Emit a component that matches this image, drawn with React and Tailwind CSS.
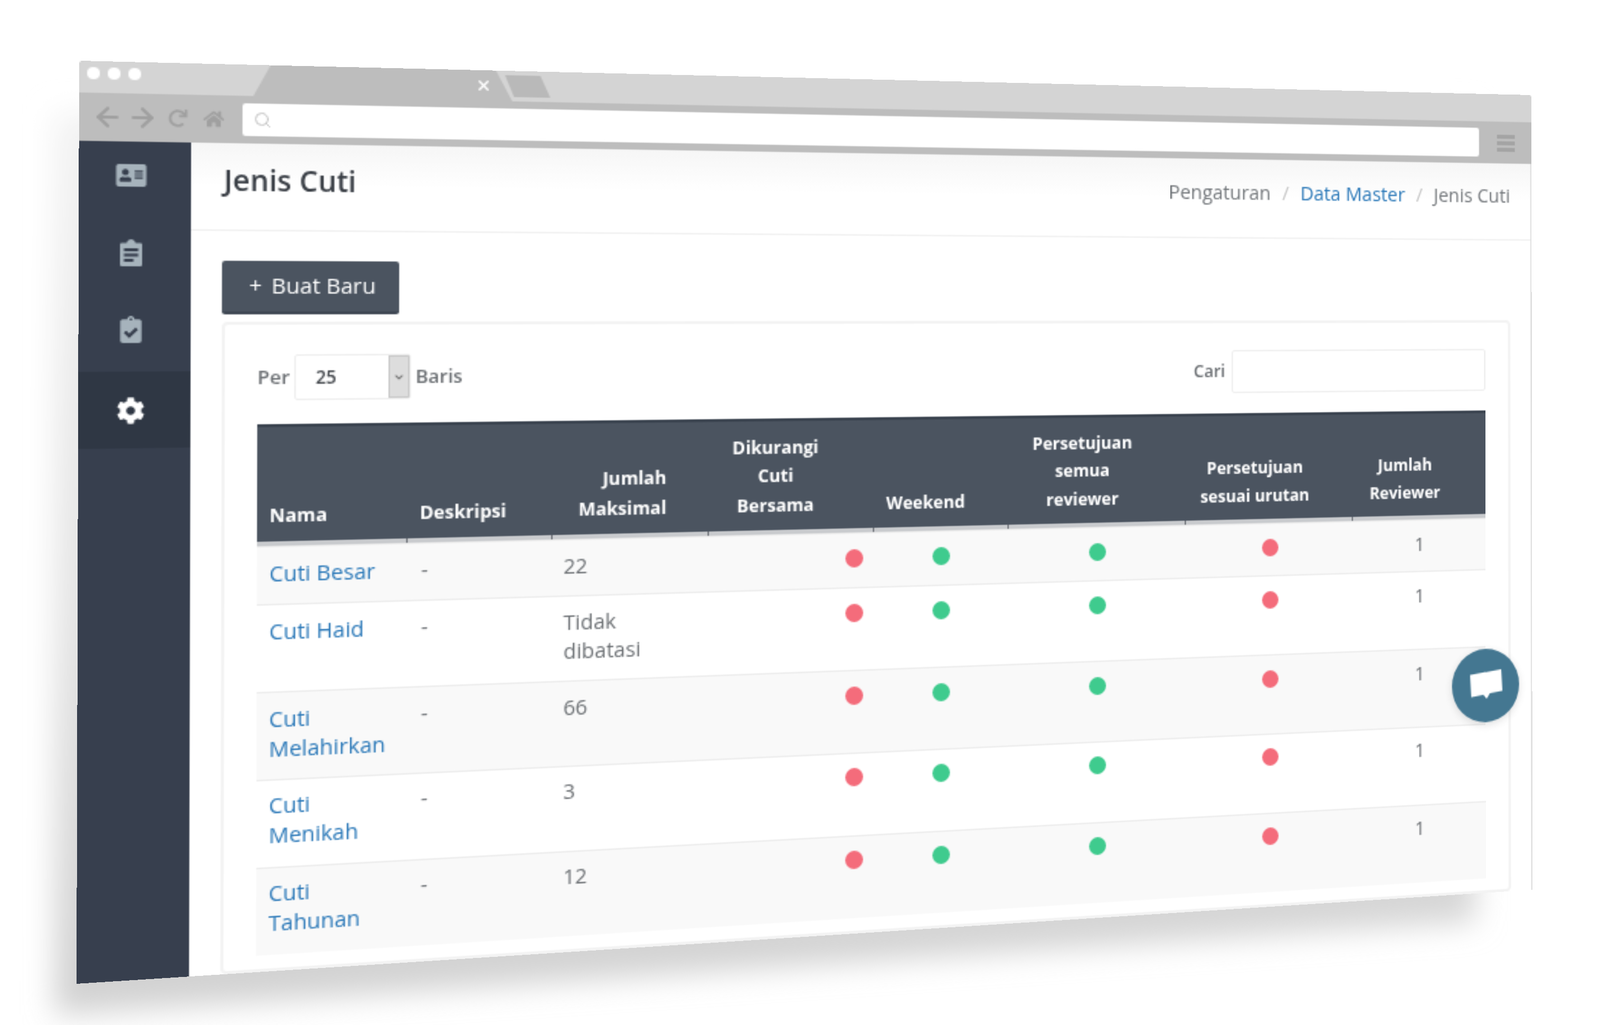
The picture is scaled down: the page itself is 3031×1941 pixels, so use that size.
import React from "react";
import { FaAddressCard, FaClipboardCheck, FaCog, FaRedo, FaHome, FaChevronDown } from "react-icons/fa";
import { ArrowLeft, ArrowRight, Search, X } from "lucide-react";

const rows = [
  { name: "Cuti Besar", max: "22", odd: true, late: false },
  { name: "Cuti Haid", max: "Tidak dibatasi", odd: false, late: false },
  { name: "Cuti Melahirkan", max: "66", odd: true, late: false },
  { name: "Cuti Menikah", max: "3", odd: false, late: true },
  { name: "Cuti Tahunan", max: "12", odd: true, late: true },
];

function Dot({ on }) {
  return <span className={on ? "inline-block h-[13px] w-[13px] -translate-y-[2px] rounded-full bg-[#3fcb8e] align-middle" : "inline-block h-[13px] w-[13px] -translate-y-[2px] rounded-full bg-[#f46c7b] align-middle"} />;
}

function Th({ children, className = "", tick = true }) {
  return (
    <th className={"relative border-t-2 border-b-[3px] border-t-[#39424e] border-b-[#c9cbce] bg-[#4b5460] pt-[8.5px] pb-[6.5px] pl-2 align-bottom text-[12.6px] leading-[20.7px] font-bold text-white " + className}>
      {children}
      {tick && <span className="absolute right-0 bottom-[-3px] h-[3px] w-px bg-[#6b6f75]" />}
    </th>
  );
}

function ClipboardLines() {
  return (
    <svg width="14" height="18" viewBox="0 0 14 18" fill="none">
      <path d="M1 2.5h3.2C4.5 1 5.6 0 7 0s2.500 1 2.800 2.500H13a1 1 0 0 1 1 1V17a1 1 0 0 1-1 1H1a1 1 0 0 1-1-1V3.500a1 1 0 0 1 1-1z" fill="#a6b3bc" />
      <rect x="2.500" y="6" width="9" height="2" fill="#373f4e" />
      <rect x="2.500" y="9.500" width="9" height="2" fill="#373f4e" />
      <rect x="2.500" y="13" width="6" height="2" fill="#373f4e" />
    </svg>
  );
}

function App() {
  const cell = "border-t border-[#ececec] align-top text-[14.6px] leading-5 text-[#6c7074]";
  return (
    <div className="relative h-[1941px] w-[3031px] overflow-hidden bg-white font-['Open_Sans',sans-serif]">
      <svg className="absolute inset-0" width="3031" height="1941">
        <defs>
          <filter id="soft" x="-10%" y="-10%" width="120%" height="120%">
            <feGaussianBlur stdDeviation="28" />
          </filter>
          <linearGradient id="fade" x1="0" y1="0" x2="0" y2="1">
            <stop offset="0" stopColor="#f3f3f3" />
            <stop offset="0.55" stopColor="#e4e4e4" />
            <stop offset="1" stopColor="#d0d0d0" />
          </linearGradient>
        </defs>
        <polygon points="104,215 2790,215 2795,1745 104,1922" fill="url(#fade)" filter="url(#soft)" />
      </svg>

      <div className="absolute top-0 left-0 flex h-[610px] w-[1056px] origin-top-left flex-col overflow-hidden rounded-t-[3px] bg-white [transform:matrix3d(3.04782,0.089015,0,0.0001526,-0.008828,2.85746,0,-0.00000435,0,0,1,0,150,115,0,1)]">
        <div className="h-[53px] shrink-0 bg-[#bdbdbd]">
          <div className="flex h-[21px] bg-[#d4d4d4]">
            <div className="flex w-[111px] items-start gap-[5px] pt-1 pl-[5px]">
              <span className="h-2 w-2 rounded-full bg-white" />
              <span className="h-2 w-2 rounded-full bg-white" />
              <span className="h-2 w-2 rounded-full bg-white" />
            </div>
            <div className="flex h-[21px] w-[172px] items-start justify-end bg-[#bdbdbd] pt-[5px] pr-[14px] [clip-path:polygon(0_100%,6.5%_0,93.5%_0,100%_100%)]">
              <X size={11} strokeWidth={3} className="text-white" />
            </div>
            <div className="mt-[3px] ml-[-5px] h-[15px] w-[31px] bg-[#b9b9b9] [clip-path:polygon(20%_100%,0_0,78%_0,100%_100%)]" />
          </div>
          <div className="flex h-[32px] items-center pl-[11px] text-[#a0a0a0]">
            <div className="flex w-[93px] items-center gap-2 blur-[0.2px]">
              <ArrowLeft size={20} strokeWidth={2.6} className="-mx-[3px]" />
              <ArrowRight size={20} strokeWidth={2.6} className="-mx-[3px]" />
              <FaRedo className="h-3 w-[15px]" />
              <FaHome className="h-3 w-[15px]" />
            </div>
            <div className="flex h-[22px] flex-1 items-center rounded-[2px] bg-white pl-[7px]">
              <Search size={12} strokeWidth={2} className="text-[#c4c4c4]" />
            </div>
            <div className="mr-[14px] ml-[15px] flex w-[15px] flex-col gap-[2px]">
              <span className="h-[3px] bg-[#a4a4a4]" />
              <span className="h-[3px] bg-[#a4a4a4]" />
              <span className="h-[3px] bg-[#a4a4a4]" />
            </div>
          </div>
        </div>

        <div className="flex min-h-0 flex-1">
          <aside className="w-[71px] shrink-0 bg-[#373f4e] text-[#a6b3bc]">
            <div className="flex h-[51px] items-center justify-center pr-[5px] pb-[6px]"><FaAddressCard className="h-[17px] w-5" /></div>
            <div className="flex h-[51px] items-center justify-center pr-[5px] pb-[5px]"><ClipboardLines /></div>
            <div className="flex h-[51px] items-center justify-center pr-[5px] pb-[5px]"><FaClipboardCheck className="h-[18px] w-[14px]" /></div>
            <div className="flex h-[51px] items-center justify-center bg-[#2f3744] pt-px pr-[5px] text-white"><FaCog className="h-[18px] w-[18px]" /></div>
          </aside>

          <main className="flex min-w-0 flex-1 flex-col border-r border-[#dcdcdc] bg-white">
            <header className="flex h-[59px] shrink-0 items-center justify-between border-b border-[#f0f0f0] bg-gradient-to-b from-[#f6f6f6] via-white to-white pr-[17px] pb-2 pl-[21px]">
              <h1 className="text-[19.3px] font-semibold text-[#3a3f46] blur-[0.25px]">Jenis Cuti</h1>
              <nav className="flex items-center pb-[2px] text-[14.9px] text-[#74787c] blur-[0.25px]">
                <span>Pengaturan</span>
                <span className="px-[9px] text-[#c4c4c4]">/</span>
                <span className="text-[#2a78b8]">Data Master</span>
                <span className="px-[9px] text-[#c4c4c4]">/</span>
                <span>Jenis Cuti</span>
              </nav>
            </header>

            <div className="flex min-h-0 flex-1 flex-col pt-5 pr-[17px] pl-5">
              <button className="flex h-9 w-[116px] shrink-0 items-center justify-center gap-[6px] rounded-[2px] border-b-2 border-[#3f4753] bg-[#4b5460] pb-px pl-[2px] text-[14.700px] font-medium text-white">
                <span>+</span>
                <span>Buat Baru</span>
              </button>

              <section className="mt-[5px] flex-1 overflow-hidden rounded-[4px] border-2 border-[#f3f3f3] pt-5 pr-[19px] pl-[21px] blur-[0.25px]">
                <div className="flex items-start justify-between">
                  <div className="flex h-[31px] items-center text-[13px] font-semibold text-[#6c7074]">
                    <span className="mr-[5px] w-[19px]">Per</span>
                    <div className="flex h-[31px] w-[77px] overflow-hidden rounded-[2px] border border-[#eeeeee]">
                      <span className="flex-1 pt-[6px] pl-[13px] text-[12px] leading-[18px] font-semibold text-[#44484d]">25</span>
                      <span className="flex w-[14px] items-center justify-center border border-[#c8c8c8] bg-[#dddddd] text-[#6f6f6f]">
                        <FaChevronDown className="h-[6px] w-[8px]" />
                      </span>
                    </div>
                    <span className="ml-[3px]">Baris</span>
                  </div>
                  <div className="flex items-center gap-[5px] text-[13px] font-semibold text-[#6c7074]">
                    <span>Cari</span>
                    <div className="h-8 w-[206px] rounded-[2px] border border-[#eeeeee] bg-white" />
                  </div>
                </div>

                <table className="mt-[15px] w-[903px] table-fixed border-separate border-spacing-0">
                  <colgroup>
                    <col className="w-[99px]" />
                    <col className="w-[98px]" />
                    <col className="w-[109px]" />
                    <col className="w-[119px]" />
                    <col className="w-[100px]" />
                    <col className="w-[136px]" />
                    <col className="w-[133px]" />
                    <col className="w-[109px]" />
                  </colgroup>
                  <thead>
                    <tr>
                      <Th className="text-left">Nama</Th>
                      <Th className="text-left">Deskripsi</Th>
                      <Th className="pr-[30px] text-right">Jumlah<br />Maksimal</Th>
                      <Th className="pr-[32px] text-center">Dikurangi<br />Cuti<br />Bersama</Th>
                      <Th className="pr-[32px] text-center">Weekend</Th>
                      <Th className="pr-[32px] text-center">Persetujuan<br />semua<br />reviewer</Th>
                      <Th className="pr-[32px] text-center">Persetujuan<br />sesuai urutan</Th>
                      <Th className="pr-[32px] text-center" tick={false}>Jumlah<br />Reviewer</Th>
                    </tr>
                  </thead>
                  <tbody>
                    {rows.map((r) => {
                      const td = cell + (r.late ? " pt-[6px] pb-3" : " pt-[7px] pb-[11px]");
                      return (
                        <tr key={r.name} className={r.odd ? "bg-[#f9f9f9]" : "bg-white"}>
                          <td className={td + " pr-2 pl-2"}><span className="text-[#2a78b8]">{r.name}</span></td>
                          <td className={td + " pl-[9px]"}>-</td>
                          <td className={td + " pr-[30px] pl-[7.5px]"}>{r.max}</td>
                          <td className={td + " pr-[8.5px] text-right"}><Dot on={false} /></td>
                          <td className={td + " pr-[10px] pl-2 text-center"}><Dot on={true} /></td>
                          <td className={td + " pr-[10px] pl-2 text-center"}><Dot on={true} /></td>
                          <td className={td + " pr-[9px] pl-2 text-center"}><Dot on={false} /></td>
                          <td className={td + " pr-2 pl-2 text-center"}>1</td>
                        </tr>
                      );
                    })}
                  </tbody>
                </table>
                <div className="mt-[9px] ml-[48px] flex h-px w-[57px]">
                  <span className="flex-1 bg-[#5b9fe3]" />
                  <span className="w-3 bg-[#2b2f36]" />
                  <span className="flex-1 bg-[#5b9fe3]" />
                </div>
              </section>
            </div>
          </main>
        </div>

        <div className="absolute top-[424px] left-[989px] flex h-14 w-14 items-center justify-center rounded-full bg-[#447791] shadow-[0_2px_6px_rgba(0,0,0,0.12)]">
          <svg width="27" height="24" viewBox="0 0 27 24">
            <polygon points="0,3.5 26,0 27,16.5 16.5,18 14,22 11,19 1,20.5" fill="#ffffff" />
          </svg>
        </div>
      </div>
    </div>
  );
}

export default App;
